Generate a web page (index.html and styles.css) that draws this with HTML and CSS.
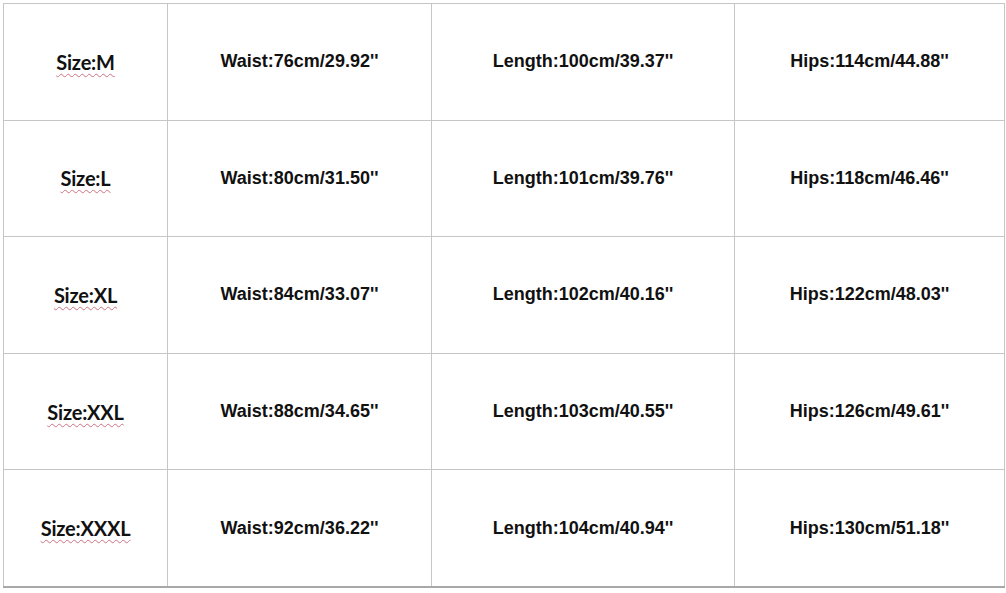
FILE: index.html
```html
<!DOCTYPE html>
<html>
<head>
<meta charset="utf-8">
<link rel="stylesheet" href="styles.css">
</head>
<body>
<table class="chart">
  <colgroup><col class="c1"><col class="c2"><col class="c3"><col class="c4"></colgroup>
  <tr><td class="size"><span class="sp">Size:M</span></td><td>Waist:76cm/29.92''</td><td>Length:100cm/39.37''</td><td>Hips:114cm/44.88''</td></tr>
  <tr><td class="size"><span class="sp">Size:L</span></td><td>Waist:80cm/31.50''</td><td>Length:101cm/39.76''</td><td>Hips:118cm/46.46''</td></tr>
  <tr><td class="size"><span class="sp">Size:XL</span></td><td>Waist:84cm/33.07''</td><td>Length:102cm/40.16''</td><td>Hips:122cm/48.03''</td></tr>
  <tr><td class="size"><span class="sp">Size:XXL</span></td><td>Waist:88cm/34.65''</td><td>Length:103cm/40.55''</td><td>Hips:126cm/49.61''</td></tr>
  <tr><td class="size"><span class="sp">Size:XXXL</span></td><td>Waist:92cm/36.22''</td><td>Length:104cm/40.94''</td><td>Hips:130cm/51.18''</td></tr>
</table>
</body>
</html>
```
FILE: styles.css
```css
html, body { margin: 0; padding: 0; background: #fff; }
body { padding: 3px 0 0 3px; }
.chart {
  border-collapse: collapse;
  table-layout: fixed;
  width: 1001px;
  font-family: "Liberation Sans", Arial, sans-serif;
  font-weight: bold;
  font-size: 18px;
  color: #111;
}
.c1 { width: 164px; }
.c2 { width: 264px; }
.c3 { width: 303px; }
.c4 { width: 270px; }
.chart td {
  border: 1px solid #c6c6c6;
  height: 115.6px;
  padding: 0;
  text-align: center;
  vertical-align: middle;
  white-space: nowrap;
}
.chart tr:last-child td { border-bottom: 2px solid #a8a8a8; }
.chart td.size {
  font-family: Lato, "Open Sans", sans-serif;
  font-size: 20px;
  letter-spacing: -0.2px;
}
.sp {
  text-decoration-line: underline;
  text-decoration-style: wavy;
  text-decoration-color: #d07080;
  text-decoration-thickness: 1px;
  text-underline-offset: 3px;
}
```
